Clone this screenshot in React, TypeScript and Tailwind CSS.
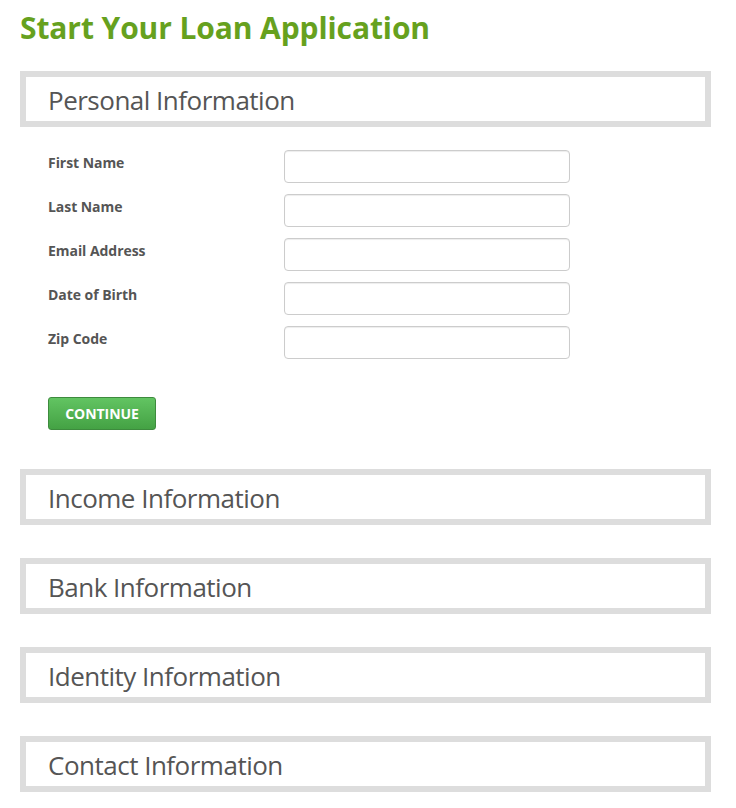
import React from "react";

const fields = ["First Name", "Last Name", "Email Address", "Date of Birth", "Zip Code"];
const sections = ["Income Information", "Bank Information", "Identity Information", "Contact Information"];

const SectionBox = ({ title }: { title: string }) => (
  <div className="w-[691px] h-[56px] border-[6px] border-[#dddddd] bg-white flex items-center pl-[22px] pt-[1px]">
    <h2 className="text-[26px] leading-none text-[#555555] tracking-[-0.5px]">{title}</h2>
  </div>
);

const App = () => {
  return (
    <div className="min-h-screen bg-white pl-5 pt-[9px]" style={{ fontFamily: '"Open Sans", "Noto Sans", sans-serif' }}>
      <h1 className="text-[30px] leading-[38px] font-bold text-[#66a11e] tracking-[-0.1px]">
        Start Your Loan Application
      </h1>

      <div className="mt-[24px]">
        <SectionBox title="Personal Information" />
      </div>

      {/* Personal fields */}
      <div className="pl-7 pt-[23px] flex flex-col gap-[11px]">
        {fields.map((f) => (
          <div key={f} className="flex items-start">
            <label className="w-[236px] pt-[4px] text-[14px] leading-[18px] font-bold text-[#555555] tracking-[-0.05px]">
              {f}
            </label>
            <input
              type="text"
              className="w-[286px] h-[33px] rounded-[4px] border border-[#cccccc] bg-white shadow-[inset_0_1px_1px_rgba(0,0,0,0.075)]"
            />
          </div>
        ))}

        <div className="pt-[27px]">
          <button className="w-[108px] h-[33px] rounded-[3px] border border-[#3d8b3d] bg-gradient-to-b from-[#62c462] to-[#44a244] text-white text-[14px] font-bold tracking-[-0.05px]">
            CONTINUE
          </button>
        </div>
      </div>

      <div className="mt-[39px] flex flex-col gap-[33px]">
        {sections.map((s) => (
          <SectionBox key={s} title={s} />
        ))}
      </div>
    </div>
  );
};

export default App;
